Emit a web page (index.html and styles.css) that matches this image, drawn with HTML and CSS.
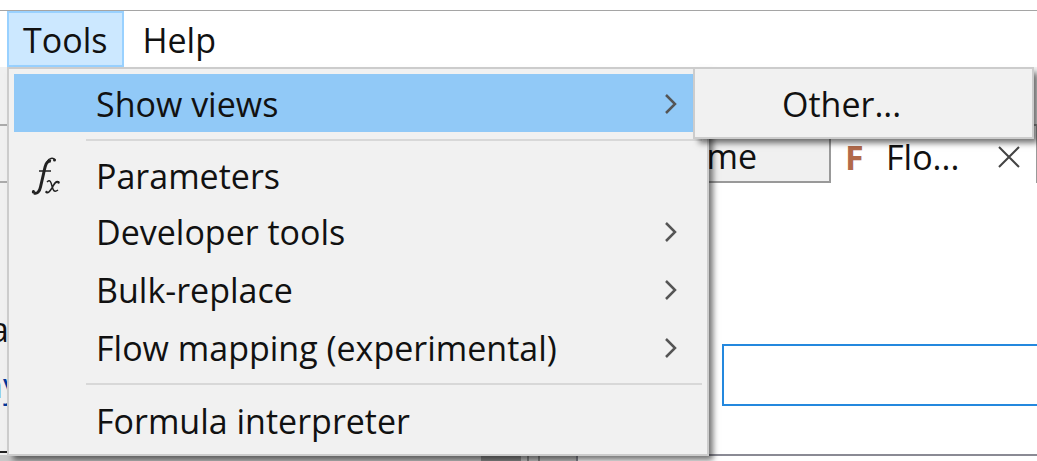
FILE: index.html
```html
<!DOCTYPE html>
<html lang="en">
<head>
<meta charset="utf-8">
<title>Tools menu</title>
<link rel="stylesheet" href="styles.css">
</head>
<body>
<nav class="menubar">
  <div class="menu-anchor">
    <button class="menubar-button is-open" type="button" aria-expanded="true">Tools</button>
    <div class="menu" role="menu">
      <div class="menu-entry">
        <button class="menu-item is-active" type="button" role="menuitem"><span class="menu-icon"></span><span class="menu-label">Show views</span><svg class="arrow" viewBox="0 0 14 22"><path d="M2 2l9 9-9 9"/></svg></button>
        <div class="menu submenu" role="menu">
          <button class="menu-item" type="button" role="menuitem"><span class="menu-icon"></span><span class="menu-label">Other...</span></button>
        </div>
      </div>
      <hr class="menu-separator">
      <button class="menu-item is-compact" type="button" role="menuitem"><span class="menu-icon"><svg class="fx" viewBox="0 0 30 40"><path class="thick" d="M20 5C15 4 14 11 12.500 18L9.500 31C8.500 36 6 38 3 37"/><path class="thin" d="M24 4C22 1 18 2 16 6M8 15h12M3 37c-2 0-2-2 0-2M16 26c3-3 4 0 5 4s2 7 6 4M28 26c-4-2-5 3-7 6s-4 6-6 4"/><circle cx="23.500" cy="4" r="1.500"/><circle cx="2.500" cy="35.500" r="1.500"/><circle cx="27.500" cy="26.500" r="1.200"/><circle cx="15.500" cy="36" r="1.200"/></svg></span><span class="menu-label">Parameters</span></button>
      <button class="menu-item" type="button" role="menuitem"><span class="menu-icon"></span><span class="menu-label">Developer tools</span><svg class="arrow" viewBox="0 0 14 22"><path d="M2 2l9 9-9 9"/></svg></button>
      <button class="menu-item" type="button" role="menuitem"><span class="menu-icon"></span><span class="menu-label">Bulk-replace</span><svg class="arrow" viewBox="0 0 14 22"><path d="M2 2l9 9-9 9"/></svg></button>
      <button class="menu-item" type="button" role="menuitem"><span class="menu-icon"></span><span class="menu-label">Flow mapping (experimental)</span><svg class="arrow" viewBox="0 0 14 22"><path d="M2 2l9 9-9 9"/></svg></button>
      <hr class="menu-separator">
      <button class="menu-item" type="button" role="menuitem"><span class="menu-icon"></span><span class="menu-label">Formula interpreter</span></button>
    </div>
  </div>
  <button class="menubar-button" type="button">Help</button>
</nav>
<main class="workspace">
  <section class="navigator">
    <div class="navigator-tabs"></div>
    <div class="navigator-body">
      <span class="nav-text">a</span>
      <a class="nav-link" href="#">ny</a>
      <hr class="nav-rule">
    </div>
    <div class="scrollbar"><span class="scroll-thumb"></span><span class="scroll-end"></span><span class="sash"></span></div>
  </section>
  <section class="editor">
    <div class="editor-tabs">
      <button class="tab" type="button">me</button>
      <button class="tab is-selected" type="button"><b class="flow-icon">F</b><span class="tab-label">Flo...</span><svg class="close" viewBox="0 0 24 24"><path d="M2 2l20 20M22 2L2 22"/></svg></button>
    </div>
    <div class="editor-body"><input class="field" type="text" aria-label="Name"></div>
    <div class="editor-foot"></div>
  </section>
</main>
</body>
</html>
```
FILE: styles.css
```css
* { box-sizing: border-box; }
body {
  margin: 0;
  padding-top: 10px;
  min-height: 100vh;
  display: flex;
  flex-direction: column;
  overflow: hidden;
  background: #fff;
  color: #111;
  font-family: "Open Sans", "Noto Sans", sans-serif;
  font-size: 34px;
  line-height: 44px;
}
button {
  margin: 0;
  border: 0;
  background: none;
  color: inherit;
  font: inherit;
  white-space: nowrap;
}
.menubar {
  display: flex;
  height: 57px;
  padding-left: 7px;
  border-top: 1px solid #a5a5a5;
}
.menu-anchor { position: relative; z-index: 2; }
.menubar-button { height: 56px; padding: 2px 18px 0; }
.menubar-button.is-open {
  padding: 2px 15px 0 14px;
  border: 2px solid #99d1ff;
  background: #cce8ff;
}
.menu {
  position: absolute;
  top: 56px;
  left: 0;
  width: 702px;
  padding: 5px;
  border: 2px solid #ccc;
  background: #f1f1f1;
  box-shadow: 5px 5px 6px -1px rgba(0, 0, 0, .55);
}
.menu-entry { position: relative; }
.menu-item {
  display: flex;
  align-items: center;
  width: 100%;
  height: 58px;
  padding: 2px 24px 0 0;
  text-align: left;
}
.menu-item.is-compact { height: 55px; }
.menu-item.is-active { background: #91c9f7; }
.menu-icon {
  flex: none;
  display: flex;
  justify-content: center;
  width: 82px;
  padding-right: 18px;
}
.menu-label { flex: 1; }
.menu-separator {
  height: 2px;
  margin: 7px 0 6px 72px;
  border: 0;
  background: #d8d8d8;
}
.submenu { top: -7px; left: 679px; width: 341px; }
.arrow { flex: none; width: 14px; height: 22px; }
.arrow path { fill: none; stroke: #555; stroke-width: 2.5; }
.fx { width: 30px; height: 40px; fill: #222; }
.fx path { fill: none; stroke: #222; }
.fx .thick { stroke-width: 3; }
.fx .thin { stroke-width: 1.5; }
.workspace { flex: 1; display: flex; background: #f0f0f0; }
.navigator { flex: none; display: flex; flex-direction: column; width: 576px; }
.navigator-tabs {
  height: 59px;
  margin-top: 57px;
  border-top: 2px solid #aaa;
  border-bottom: 2px solid #aaa;
}
.navigator-body {
  flex: 1;
  display: flex;
  flex-direction: column;
  align-items: flex-start;
  padding-top: 118px;
}
.nav-text,
.nav-link {
  display: flex;
  justify-content: flex-end;
  line-height: 56px;
}
.nav-text { width: 9px; }
.nav-link { width: 20px; color: #00379b; text-decoration: none; }
.nav-rule { width: 21px; height: 2px; margin: 38px 0 0; border: 0; background: #222; }
.scrollbar { display: flex; height: 6px; padding-left: 481px; background: #c8c8c8; }
.scroll-thumb { width: 40px; background: #8c8c8c; }
.scroll-end { width: 8px; border-right: 2px solid #888; }
.sash { width: 11px; border-right: 2px solid #888; }
.editor { flex: 1; min-width: 0; display: flex; flex-direction: column; background: #fff; }
.editor-tabs {
  display: flex;
  height: 116px;
  padding-top: 57px;
  background: #f0f0f0;
}
.tab {
  flex: none;
  display: flex;
  align-items: center;
  justify-content: flex-end;
  width: 255px;
  padding: 4px 72px 0 0;
  border: solid #999;
  border-width: 2px 2px 2px 0;
}
.tab.is-selected {
  flex: 1;
  min-width: 0;
  justify-content: flex-start;
  gap: 24px;
  padding: 4px 15px 0 14px;
  border-width: 2px 1px 0 0;
  background: #fff;
}
.flow-icon { width: 17px; color: #b26a4a; }
.tab-label { flex: 1; text-align: left; }
.close { flex: none; width: 24px; height: 24px; }
.close path { fill: none; stroke: #444; stroke-width: 2; }
.editor-body { flex: 1; padding: 161px 0 48px 146px; }
.field {
  display: block;
  width: 100%;
  height: 62px;
  border: solid #2488de;
  border-width: 2px 0 2px 2px;
  background: #fff;
  font: inherit;
}
.editor-foot { height: 7px; border: solid #8a8a94; border-width: 2px 0 0 2px; }
```
